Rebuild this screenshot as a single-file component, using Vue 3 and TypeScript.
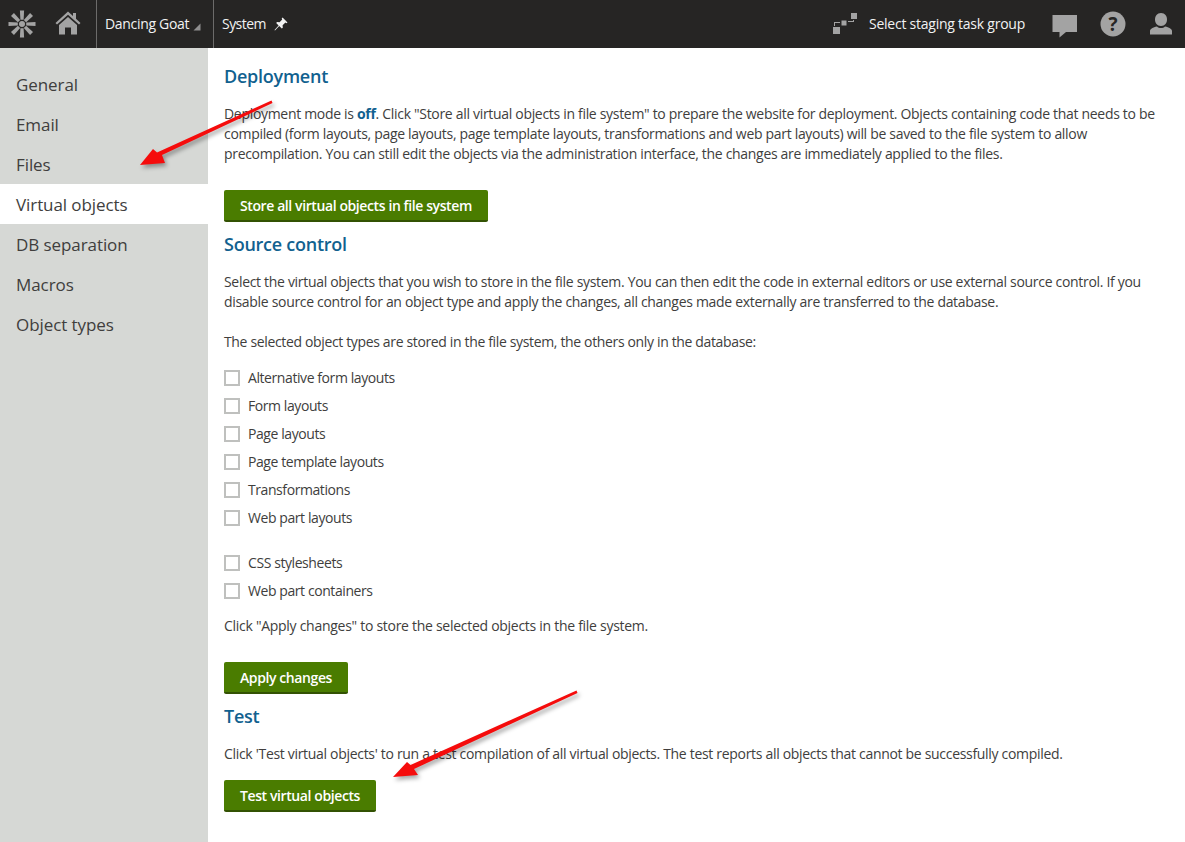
<script setup lang="ts">
const nav: string[] = ['General', 'Email', 'Files', 'Virtual objects', 'DB separation', 'Macros', 'Object types']
const groupA: string[] = ['Alternative form layouts', 'Form layouts', 'Page layouts', 'Page template layouts', 'Transformations', 'Web part layouts']
const groupB: string[] = ['CSS stylesheets', 'Web part containers']
const petals: number[] = [0, 45, 90, 135, 180, 225, 270, 315]
</script>

<template>
  <div class="page">
    <header class="bar">
      <div class="logo">
        <svg width="28" height="28" viewBox="0 0 28 28">
          <g fill="#a3a3a3">
            <circle cx="14" cy="14" r="3" />
            <path v-for="a in petals" :key="a" d="M11.9 0.5 L16.1 0.5 L15.6 9.8 L12.4 9.8 Z" :transform="`rotate(${a} 14 14)`" />
          </g>
        </svg>
      </div>
      <div class="home">
        <svg width="26" height="26" viewBox="0 0 26 26">
          <path fill="#a3a3a3" d="M13 1.5 L18 6 L18 3 L21 3 L21 8.8 L25.5 13 L24 14.6 L13 4.8 L2 14.6 L0.5 13 Z M4 15 L13 7 L22 15 L22 24.5 L16 24.5 L16 17.5 L10 17.5 L10 24.5 L4 24.5 Z" />
        </svg>
      </div>
      <div class="crumb site">
        <span>Dancing Goat</span>
        <svg class="tri" width="8" height="8" viewBox="0 0 8 8"><path fill="#8f8f8f" d="M7.5 0.5 L7.5 7.5 L0.5 7.5 Z" /></svg>
      </div>
      <div class="crumb app">
        <span>System</span>
        <svg width="14" height="14" viewBox="0 0 14 14">
          <path fill="#f2f2f2" d="M8.6 0.5 L13.5 5.4 L12.4 6.2 L11.4 5.6 L8.6 8.2 L8.8 10.8 L7.8 11.6 L5.2 9 L1 13.4 L0.5 13 L4.6 8.4 L2.2 6 L3 5 L5.6 5.2 L8.2 2.4 L7.7 1.4 Z" />
        </svg>
      </div>
      <div class="spacer"></div>
      <div class="staging">
        <svg width="26" height="24" viewBox="0 0 26 24">
          <g fill="#a3a3a3">
            <rect x="1" y="15" width="7" height="7" />
            <rect x="9.5" y="8.5" width="5" height="5" />
            <rect x="19" y="1" width="6" height="6" />
            <path d="M2 14 L2 10 L8 10 L8 11 L3 11 L3 14 Z M16 9 L21 9 L21 8 L22 8 L22 10 L16 10 Z" />
          </g>
        </svg>
        <span>Select staging task group</span>
      </div>
      <svg class="chat" width="26" height="24" viewBox="0 0 26 24">
        <path fill="#a3a3a3" d="M0.5 1 L25 1 L25 18 L14 18 L7.5 23.5 L7.5 18 L0.5 18 Z" />
      </svg>
      <svg class="help" width="26" height="26" viewBox="0 0 26 26">
        <circle cx="13" cy="13" r="12.5" fill="#a3a3a3" />
        <text x="13" y="19.5" text-anchor="middle" class="q">?</text>
      </svg>
      <svg class="user" width="24" height="24" viewBox="0 0 24 24">
        <path fill="#a3a3a3" d="M12 1 C16 1 18 4 18 7.5 C18 11 16 14 12 14 C8 14 6 11 6 7.5 C6 4 8 1 12 1 Z M8 14.5 C9 15.6 10.4 16 12 16 C13.6 16 15 15.6 16 14.5 C20 15.4 23 17 23 19 L23 22.5 L1 22.5 L1 19 C1 17 4 15.4 8 14.5 Z" />
      </svg>
    </header>

    <div class="body">
      <nav class="side">
        <div v-for="n in nav" :key="n" class="item" :class="{ active: n === 'Virtual objects' }">{{ n }}</div>
      </nav>

      <main class="main">
        <h2 class="first">Deployment</h2>
        <p class="intro">Deployment mode is <b>off</b>. Click "Store all virtual objects in file system" to prepare the website for deployment. Objects containing code that needs to be<br />compiled (form layouts, page layouts, page template layouts, transformations and web part layouts) will be saved to the file system to allow<br />precompilation. You can still edit the objects via the administration interface, the changes are immediately applied to the files.</p>
        <button class="btn store">Store all virtual objects in file system</button>

        <h2>Source control</h2>
        <p class="intro">Select the virtual objects that you wish to store in the file system. You can then edit the code in external editors or use external source control. If you<br />disable source control for an object type and apply the changes, all changes made externally are transferred to the database.</p>
        <p class="selected">The selected object types are stored in the file system, the others only in the database:</p>

        <div class="checks">
          <label v-for="c in groupA" :key="c" class="check"><span class="box"></span><span class="lbl">{{ c }}</span></label>
        </div>
        <div class="checks second">
          <label v-for="c in groupB" :key="c" class="check"><span class="box"></span><span class="lbl">{{ c }}</span></label>
        </div>

        <p class="apply">Click "Apply changes" to store the selected objects in the file system.</p>
        <button class="btn">Apply changes</button>

        <h2>Test</h2>
        <p class="intro">Click 'Test virtual objects' to run a test compilation of all virtual objects. The test reports all objects that cannot be successfully compiled.</p>
        <button class="btn last">Test virtual objects</button>
      </main>
    </div>

    <svg class="arrows" width="1185" height="842" viewBox="0 0 1185 842">
      <g fill="#f50c0c">
        <path d="M271.5 100.5 L272.5 103 L162 155 L165 163 L140 165 L153 149 L157 152.5 Z" />
        <path d="M576.5 690.5 L577.5 693 L414 769 L418 775 L393 777 L407 762 L410.5 765 Z" />
      </g>
    </svg>
  </div>
</template>

<style>
html, body { margin: 0; background: #fff; }
</style>

<style scoped>
.page {
  position: relative;
  width: 1185px;
  height: 842px;
  overflow: hidden;
  font-family: "Open Sans", "Noto Sans", sans-serif;
  color: #403e3d;
}
.bar {
  height: 48px;
  background: #262524;
  display: flex;
  align-items: center;
  color: #f2f2f2;
  font-size: 14px;
  letter-spacing: -0.31px;
}
.bar span { margin-top: -2px; }
.logo { width: 28px; margin-left: 8px; height: 28px; }
.home { width: 26px; height: 26px; margin-left: 19px; margin-right: 15px; margin-top: -2px; }
.crumb {
  height: 48px;
  display: flex;
  align-items: center;
  border-left: 1px solid #6c6b6a;
  padding-left: 8px;
  box-sizing: border-box;
}
.site { width: 117px; gap: 4px; }
.tri { margin-top: 5px; }
.app { gap: 8px; letter-spacing: -0.55px; }
.spacer { flex: 1; }
.staging { display: flex; align-items: center; gap: 11px; margin-right: 27px; letter-spacing: -0.24px; }
.chat { margin-right: 22px; margin-top: 3px; }
.help { margin-right: 23px; }
.user { margin-right: 12px; }
.q { font: 700 19px "Open Sans", sans-serif; fill: #262524; }
.body { display: flex; height: 794px; }
.side {
  width: 208px;
  flex: none;
  background: #d6d8d5;
  padding-top: 16px;
  box-sizing: border-box;
}
.item {
  height: 40px;
  line-height: 42px;
  padding-left: 16px;
  font-size: 17px;
  letter-spacing: -0.08px;
}
.item.active { background: #fff; }
.main { flex: 1; padding-left: 16px; font-size: 14px; letter-spacing: -0.31px; }
h2 {
  margin: 11px 0 0;
  height: 24px;
  line-height: 22px;
  font-size: 18px;
  font-weight: 600;
  letter-spacing: -0.25px;
  color: #11618f;
}
h2.first { margin-top: 17px; }
p { margin: 0; line-height: 20px; white-space: nowrap; }
.intro { margin-top: 15px; }
.selected { margin-top: 20px; letter-spacing: -0.35px; }
b { color: #11618f; font-weight: 700; }
.btn {
  display: block;
  height: 32px;
  margin: 26px 0 0;
  padding: 0 16px;
  border: 0;
  border-bottom: 2px solid #335203;
  border-radius: 2px;
  background: #4a7c00;
  color: #fff;
  font: 600 14px "Open Sans", sans-serif;
  letter-spacing: -0.4px;
}
.btn.last { margin-top: 16px; }
.checks { margin-top: 12px; display: flex; flex-direction: column; }
.checks.second { margin-top: 17px; }
.check { height: 28px; display: flex; align-items: center; gap: 8px; }
.lbl { margin-top: -2px; letter-spacing: -0.42px; }
.box {
  width: 16px;
  height: 16px;
  box-sizing: border-box;
  border: 2px solid #bfc0be;
  background: #fff;
}
.apply { margin-top: 11px; letter-spacing: -0.28px; }
.arrows {
  position: absolute;
  left: 0;
  top: 0;
  pointer-events: none;
  filter: drop-shadow(2px 3px 2px rgba(0, 0, 0, 0.35));
}
</style>
